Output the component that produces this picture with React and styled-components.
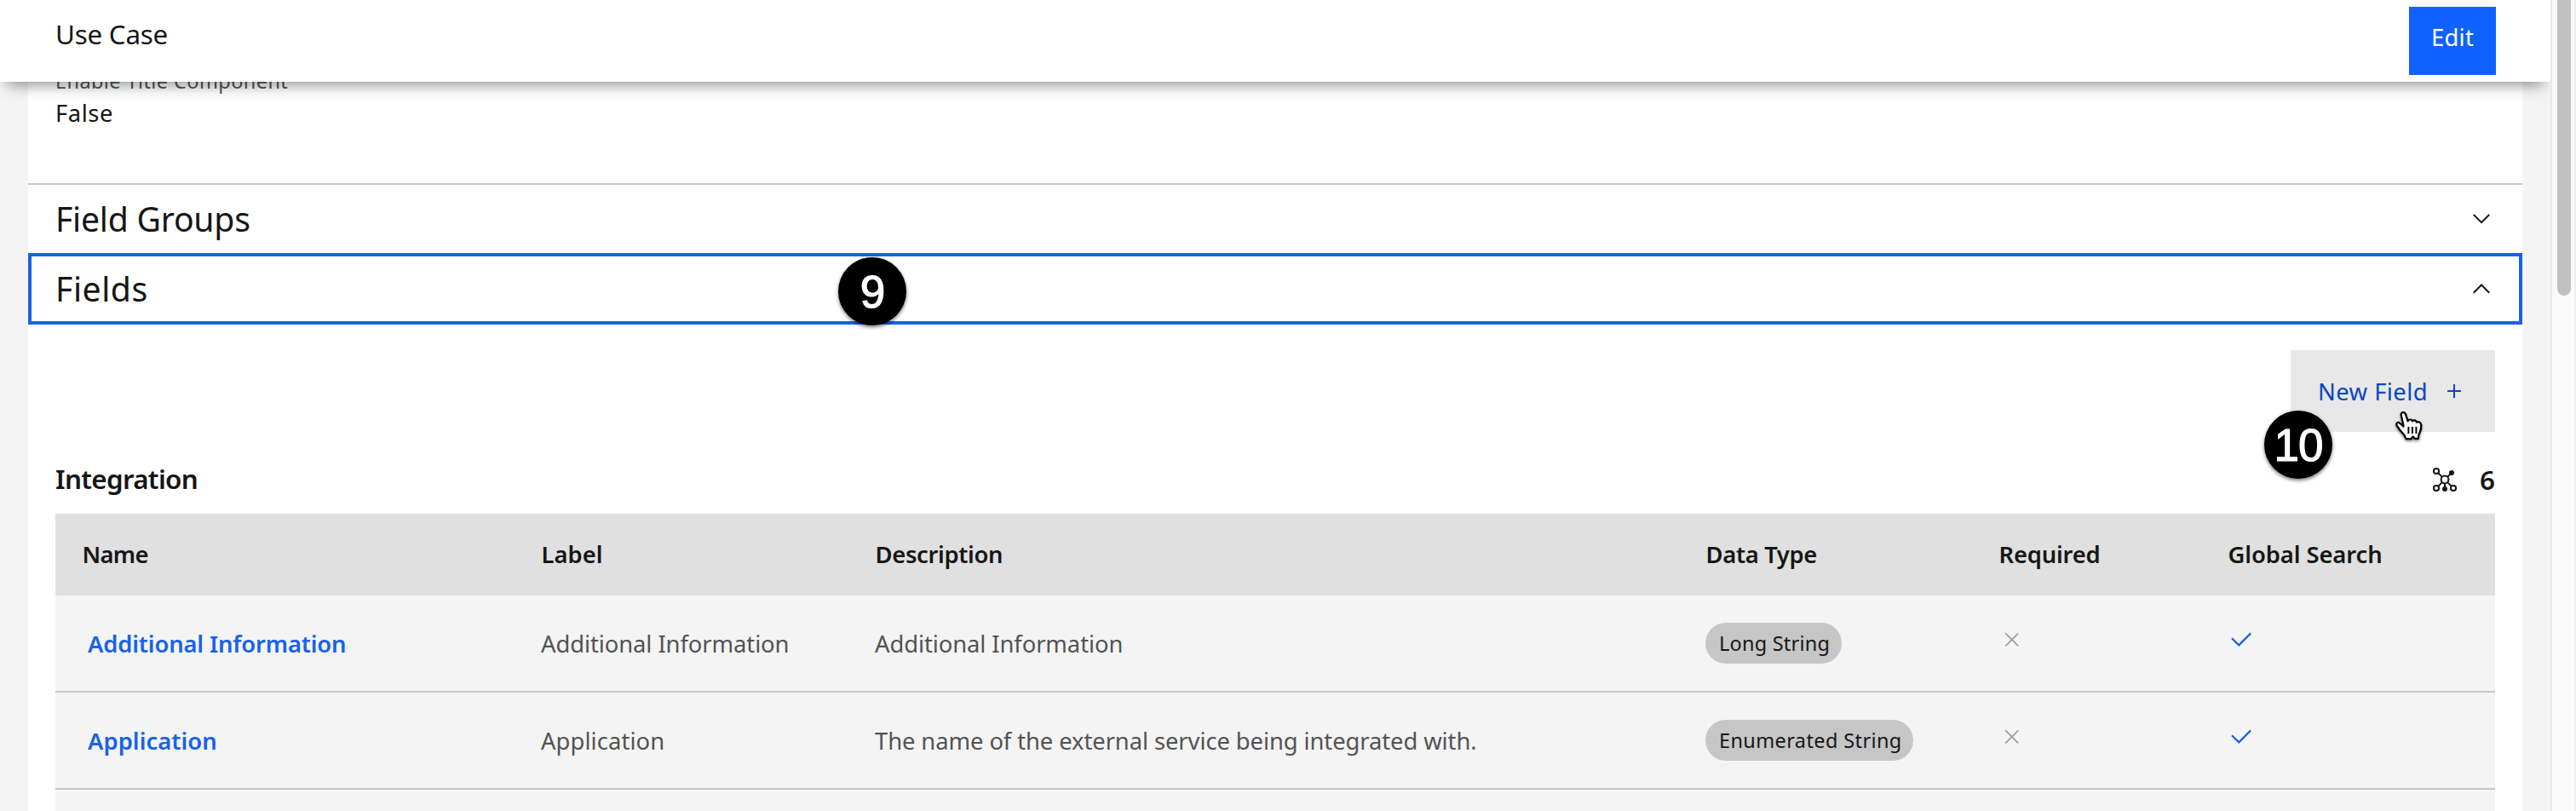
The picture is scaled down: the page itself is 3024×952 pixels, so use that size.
import React from "react";
import styled, { createGlobalStyle } from "styled-components";

const GlobalStyle = createGlobalStyle`
  *, *::before, *::after { box-sizing: border-box; }
  body {
    margin: 0;
    background: #f4f4f4;
    color: #161616;
    font-family: "Noto Sans", "Liberation Sans", sans-serif;
    overflow: hidden;
  }
  button { font: inherit; border: 0; cursor: pointer; }
`;

const Window = styled.div`
  display: flex;
  width: 3024px;
  height: 952px;
  overflow: hidden;
`;

const Page = styled.main`
  display: flex;
  flex-direction: column;
  width: 2994px;
  height: 100%;
  overflow: hidden;
`;

/* Text with tracking given in pixels */
const Text = styled.span`
  letter-spacing: ${(p) => p.$track || 0}px;
  white-space: nowrap;
`;

const Header = styled.header`
  position: relative;
  z-index: 2;
  flex: none;
  display: flex;
  justify-content: space-between;
  align-items: flex-start;
  height: 96px;
  padding: 0 64px 0 65px;
  background: #fff;
  box-shadow: 0 12px 16px -8px rgba(0, 0, 0, 0.42);
`;

const PageTitle = styled.h1`
  margin: 0;
  font-size: 31.4px;
  font-weight: 400;
  line-height: 80px;
`;

const EditButton = styled.button`
  width: 102px;
  height: 80px;
  margin-top: 8px;
  padding: 0 0 8px 26px;
  background: #0f62fe;
  color: #fff;
  font-size: 27.4px;
  line-height: 72px;
  text-align: left;
`;

const Panel = styled.section`
  flex: none;
  width: 2928px;
  height: 900px;
  margin: -20px 0 0 33px;
  background: #fff;
`;

const Property = styled.div`
  display: flex;
  flex-direction: column;
  height: 139px;
  padding-left: 32px;
`;

const PropertyLabel = styled.div`
  color: #525252;
  font-size: 23.5px;
  line-height: 38px;
`;

const PropertyValue = styled.div`
  font-size: 27.4px;
  line-height: 38px;
`;

const AccordionHeading = styled.div`
  display: flex;
  justify-content: space-between;
  align-items: center;
  height: ${(p) => (p.$focused ? 84 : 82)}px;
  padding: ${(p) => (p.$focused ? "0 34px 0 28px" : "0 38px 0 32px")};
  border: ${(p) => (p.$focused ? "4px solid #1762e8" : "0")};
  border-top: ${(p) => (p.$focused ? "4px solid #1762e8" : "2px solid #c6c6c6")};
  font-size: 39.2px;
  line-height: 78px;
`;

const ButtonBar = styled.div`
  display: flex;
  justify-content: flex-end;
  padding: 30px 32px 0;
`;

const NewFieldButton = styled.button`
  display: flex;
  justify-content: space-between;
  align-items: center;
  width: 240px;
  height: 96px;
  padding: 0 40px 0 32px;
  background: #e8e8e8;
  color: #0a45c4;
  font-size: 27.4px;
`;

const GroupHeading = styled.div`
  display: flex;
  justify-content: space-between;
  align-items: center;
  height: 96px;
  padding: 16px 32px 0;
  font-size: 31.4px;
  font-weight: 600;
  line-height: 42px;
`;

const GroupTitle = styled.div`
  padding-bottom: 2px;
`;

const GroupCount = styled.div`
  display: flex;
  align-items: center;
  gap: 25px;
`;

const Table = styled.div`
  margin: 0 32px;
`;

const TableRow = styled.div`
  display: grid;
  grid-template-columns: 539px 392px 975px 344px 269px 1fr;
  align-items: center;
  height: ${(p) => (p.$head ? 96 : 114)}px;
  padding: ${(p) => (p.$head ? "0 0 2px 31.5px" : "0 0 0 31px")};
  background: ${(p) => (p.$head ? "#e0e0e0" : "#f4f4f4")};
  border-bottom: ${(p) => (p.$head ? "0" : "2px solid #c6c6c6")};
  font-size: 27.4px;
  font-weight: ${(p) => (p.$head ? 600 : 400)};
  color: ${(p) => (p.$head ? "#161616" : "#525252")};
`;

const FieldLink = styled.a`
  padding-left: 7px;
  color: #1762e8;
  font-weight: 600;
  cursor: pointer;
`;

const Tag = styled.span`
  display: inline-flex;
  align-items: center;
  justify-self: start;
  height: 48px;
  width: ${(p) => p.$width}px;
  padding: 0 16px;
  border-radius: 24px;
  background: #c6c6c6;
  color: #161616;
  font-size: 23.5px;
`;

const FlagCell = styled.div`
  display: flex;
  padding: 0 0 8px ${(p) => p.$indent}px;
  color: ${(p) => p.$color};
`;

const ScrollTrack = styled.aside`
  width: 30px;
  height: 100%;
  padding-left: 6px;
  background: #fafafa;
  border-left: 2px solid #e8e8e8;
  border-right: 2px solid #ededed;
`;

const ScrollThumb = styled.div`
  width: 16px;
  height: 347px;
  border-radius: 0 0 8px 8px;
  background: #c1c1c1;
`;

/* Numbered callout placed over the page */
const Callout = styled.div`
  position: absolute;
  z-index: 3;
  left: ${(p) => p.$x}px;
  top: ${(p) => p.$y}px;
  width: 80px;
  height: 80px;
  border-radius: 50%;
  background: #000;
  box-shadow: 0 2px 4px rgba(0, 0, 0, 0.55);
  color: #fff;
  font: 53px/81px "Liberation Sans", Arial, sans-serif;
  letter-spacing: -1px;
  text-align: center;
  -webkit-text-stroke: 1.2px #fff;
`;

const Pointer = styled.svg`
  position: absolute;
  z-index: 4;
  left: 2808px;
  top: 480px;
  overflow: visible;
  filter: drop-shadow(0 2px 1.5px rgba(0, 0, 0, 0.45));
`;

const Chevron = ({ up }) => (
  <svg width="20" height="12" viewBox="0 0 20 12" fill="none" stroke="#161616" strokeWidth="2">
    <path d={up ? "M0.8 10.7 10 1.5 19.2 10.7" : "M0.8 1 10 10.2 19.2 1"} />
  </svg>
);

const Plus = () => (
  <svg width="16" height="16" viewBox="0 0 16 16" fill="none" stroke="currentColor" strokeWidth="2">
    <path d="M8 0V16M0 8H16" />
  </svg>
);

const Cross = () => (
  <svg width="18" height="18" viewBox="0 0 18 18" fill="none" stroke="currentColor" strokeWidth="1.9">
    <path d="M1.3 1.3 16.3 16.3M16.3 1.3 1.3 16.3" />
  </svg>
);

const Check = () => (
  <svg width="25" height="18" viewBox="0 0 25 18" fill="none" stroke="currentColor" strokeWidth="2.2">
    <path d="M1 7.2 9.2 15.4 23.2 1.4" />
  </svg>
);

const Network = () => (
  <svg width="32" height="32" viewBox="0 0 32 32" fill="none" stroke="#161616" strokeWidth="2">
    <path d="M8.4 8.4 12.6 12.6M19.4 12.6 24 8M12.6 19.4 8.4 23.6M19.4 19.4 23.6 23.6M16 21V27" />
    <circle cx="16" cy="16" r="4.4" />
    <circle cx="6" cy="6" r="3.1" />
    <circle cx="6" cy="26" r="3.1" />
    <circle cx="26" cy="26" r="3.1" />
    <circle cx="24" cy="8" r="3" fill="#161616" stroke="none" />
    <circle cx="16" cy="27" r="3" fill="#161616" stroke="none" />
  </svg>
);

const HandPointer = () => (
  <Pointer width="40" height="40" viewBox="0 0 40 40">
    <path
      d="M10.8 7.6C9.9 3.6 14.8 2.6 16 6.4L18.6 14.4C19.4 11.8 23.4 12 24 14.4C25.2 12.6 28.3 13 29 15.6C30.8 14.4 33.8 15.6 34.2 18.6C34.6 22.6 33.6 25.6 32.2 28.4C31.2 30.4 30.8 32 31 34.8H26.8L24.8 32.6L22.5 35.2H16.6C15.6 31.8 13.2 28.8 10.6 26.4C8.8 24.4 7.4 21.6 5.8 19.6C4 16.6 7 14.8 9.4 17L13.6 20.6Z"
      fill="#fff"
      stroke="#000"
      strokeWidth="2.2"
      strokeLinejoin="round"
    />
    <path d="M19.4 21V29M23.9 21V29M28.4 21V29" stroke="#000" strokeWidth="1.9" />
  </Pointer>
);

const COLUMNS = [
  { title: "Name", track: -0.7 },
  { title: "Label", track: 0 },
  { title: "Description", track: -0.34 },
  { title: "Data Type", track: -0.34 },
  { title: "Required", track: -0.18 },
  { title: "Global Search", track: -0.09 },
];

const FIELDS = [
  {
    name: "Additional Information",
    nameTrack: -0.15,
    label: "Additional Information",
    labelTrack: -0.08,
    description: "Additional Information",
    type: "Long String",
    typeTrack: 0.22,
    tagWidth: 160,
  },
  {
    name: "Application",
    nameTrack: 0.05,
    label: "Application",
    labelTrack: 0.09,
    description: "The name of the external service being integrated with.",
    type: "Enumerated String",
    typeTrack: 0.38,
    tagWidth: 244,
  },
];

function FieldRow({ field }) {
  return (
    <TableRow>
      <FieldLink><Text $track={field.nameTrack}>{field.name}</Text></FieldLink>
      <Text $track={field.labelTrack}>{field.label}</Text>
      <Text $track={-0.09}>{field.description}</Text>
      <Tag $width={field.tagWidth}><Text $track={field.typeTrack}>{field.type}</Text></Tag>
      <FlagCell $indent={7} $color="#a0a0a0"><Cross /></FlagCell>
      <FlagCell $indent={4} $color="#1762e8"><Check /></FlagCell>
    </TableRow>
  );
}

export default function App() {
  return (
    <>
      <GlobalStyle />
      <Window>
        <Page>
          <Header>
            <PageTitle><Text $track={-0.25}>Use Case</Text></PageTitle>
            <EditButton><Text $track={0.26}>Edit</Text></EditButton>
          </Header>
          <Panel>
            <Property>
              <PropertyLabel><Text $track={0.41}>Enable Title Component</Text></PropertyLabel>
              <PropertyValue><Text $track={0.54}>False</Text></PropertyValue>
            </Property>
            <AccordionHeading>
              <Text $track={-0.25}>Field Groups</Text>
              <Chevron />
            </AccordionHeading>
            <AccordionHeading $focused>
              <Text $track={0.55}>Fields</Text>
              <Chevron up />
            </AccordionHeading>
            <ButtonBar>
              <NewFieldButton><Text $track={0.45}>New Field</Text><Plus /></NewFieldButton>
            </ButtonBar>
            <GroupHeading>
              <GroupTitle><Text $track={-0.7}>Integration</Text></GroupTitle>
              <GroupCount><Network /><Text>6</Text></GroupCount>
            </GroupHeading>
            <Table>
              <TableRow $head>
                {COLUMNS.map((c) => <Text key={c.title} $track={c.track}>{c.title}</Text>)}
              </TableRow>
              {FIELDS.map((f) => <FieldRow key={f.name} field={f} />)}
              <TableRow />
            </Table>
          </Panel>
        </Page>
        <ScrollTrack><ScrollThumb /></ScrollTrack>
      </Window>
      <Callout $x={984} $y={302}>9</Callout>
      <Callout $x={2658} $y={482}>10</Callout>
      <HandPointer />
    </>
  );
}
